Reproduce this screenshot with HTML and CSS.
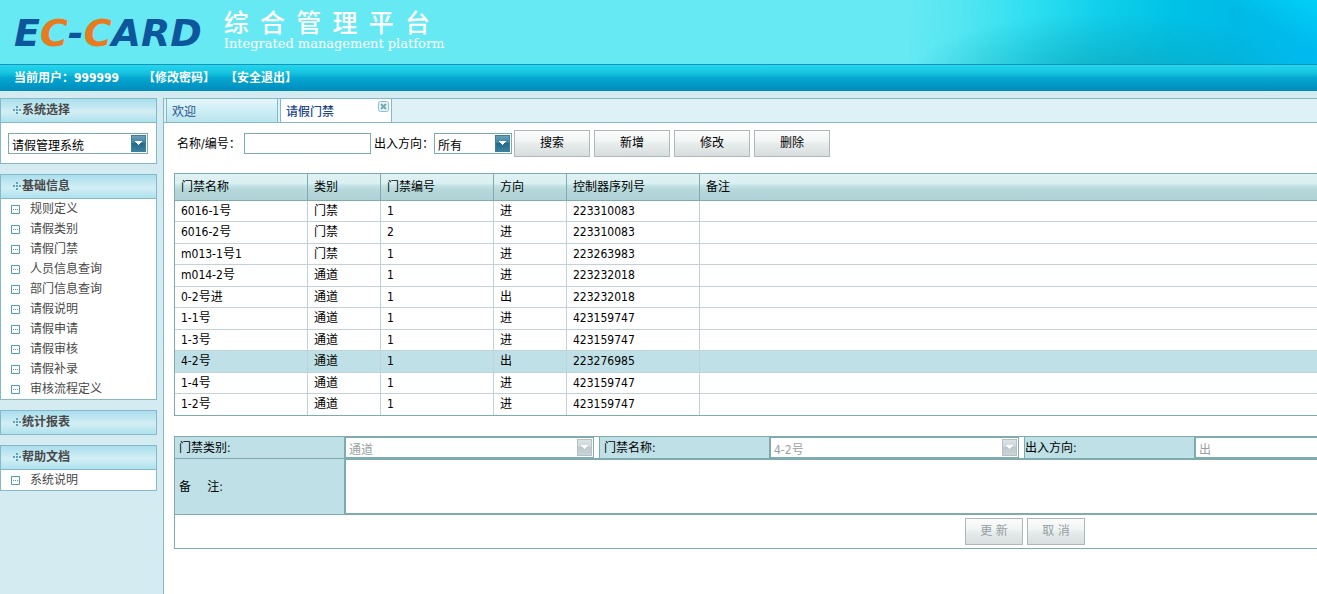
FILE: index.html
```html
<!DOCTYPE html>
<html lang="zh-CN">
<head>
<meta charset="utf-8">
<title>综合管理平台</title>
<link rel="stylesheet" href="styles.css">
</head>
<body>
<svg class="defs" aria-hidden="true">
  <symbol id="plus" viewBox="0 0 9 9"><path d="M3 0h2v2H3zM0 3h2v2H0zM3 3h2v2H3zM6 3h2v2H6zM3 6h2v2H3z" fill="#5aa3bb"/></symbol>
  <symbol id="leaf" viewBox="0 0 9 9"><path d="M.5.5h8v8h-8z" fill="#fff" stroke="#4f9db5"/><path d="M2 4h1v1H2zM4 4h1v1H4zM6 4h1v1H6z" fill="#4f9db5"/></symbol>
</svg>
<header class="banner">
  <div class="logo">E<span class="accent">C</span>-<span class="accent">C</span>ARD</div>
  <div class="brand">
    <h1 class="brand-title">综&ensp;合&ensp;管&ensp;理&ensp;平&ensp;台</h1>
    <p class="brand-sub">Integrated management platform</p>
  </div>
</header>
<nav class="userbar">
  <span class="user">当前用户：999999</span>
  <a href="#">【修改密码】</a>
  <a href="#">【安全退出】</a>
</nav>
<div class="layout">
  <aside class="sidebar">
    <section class="panel">
      <h2 class="panel-head"><svg class="plus"><use href="#plus"/></svg>系统选择</h2>
      <div class="panel-body picker">
        <div class="select-wrap">
          <select class="select" aria-label="系统选择"><option>请假管理系统</option></select>
          <svg class="arrow" viewBox="0 0 15 17"><use href="#drop"/></svg>
        </div>
      </div>
    </section>
    <section class="panel">
      <h2 class="panel-head"><svg class="plus"><use href="#plus"/></svg>基础信息</h2>
      <ul class="panel-body menu">
        <li><svg class="leaf"><use href="#leaf"/></svg><a href="#">规则定义</a></li>
        <li><svg class="leaf"><use href="#leaf"/></svg><a href="#">请假类别</a></li>
        <li><svg class="leaf"><use href="#leaf"/></svg><a href="#">请假门禁</a></li>
        <li><svg class="leaf"><use href="#leaf"/></svg><a href="#">人员信息查询</a></li>
        <li><svg class="leaf"><use href="#leaf"/></svg><a href="#">部门信息查询</a></li>
        <li><svg class="leaf"><use href="#leaf"/></svg><a href="#">请假说明</a></li>
        <li><svg class="leaf"><use href="#leaf"/></svg><a href="#">请假申请</a></li>
        <li><svg class="leaf"><use href="#leaf"/></svg><a href="#">请假审核</a></li>
        <li><svg class="leaf"><use href="#leaf"/></svg><a href="#">请假补录</a></li>
        <li><svg class="leaf"><use href="#leaf"/></svg><a href="#">审核流程定义</a></li>
      </ul>
    </section>
    <section class="panel">
      <h2 class="panel-head"><svg class="plus"><use href="#plus"/></svg>统计报表</h2>
    </section>
    <section class="panel">
      <h2 class="panel-head"><svg class="plus"><use href="#plus"/></svg>帮助文档</h2>
      <ul class="panel-body menu">
        <li><svg class="leaf"><use href="#leaf"/></svg><a href="#">系统说明</a></li>
      </ul>
    </section>
  </aside>
  <main class="main">
    <div class="tabs">
      <a class="tab" href="#">欢迎</a>
      <div class="tab active"><a href="#">请假门禁</a>
        <button class="close" type="button" aria-label="关闭"><svg viewBox="0 0 11 11"><rect x=".5" y=".5" width="10" height="10" rx="2" fill="#e6f4f7" stroke="#8fbfca"/><path d="M3 3l5 5M8 3l-5 5" stroke="#6fabb9" stroke-width="2"/></svg></button>
      </div>
    </div>
    <form class="toolbar">
      <label class="find" for="q">名称/编号：</label>
      <input class="field" id="q" type="text">
      <label class="way" for="dir">出入方向：</label>
      <div class="select-wrap short">
        <select class="select" id="dir"><option>所有</option></select>
        <svg class="arrow" viewBox="0 0 15 17"><use href="#drop"/></svg>
      </div>
      <div class="buttons">
        <button class="btn" type="button">搜索</button>
        <button class="btn" type="button">新增</button>
        <button class="btn" type="button">修改</button>
        <button class="btn" type="button">删除</button>
      </div>
    </form>
    <table class="grid">
      <colgroup><col class="c-name"><col class="c-kind"><col class="c-no"><col class="c-kind"><col class="c-name"><col></colgroup>
      <thead><tr><th>门禁名称</th><th>类别</th><th>门禁编号</th><th>方向</th><th>控制器序列号</th><th>备注</th></tr></thead>
      <tbody>
        <tr><td>6016-1号</td><td>门禁</td><td>1</td><td>进</td><td>223310083</td><td></td></tr>
        <tr><td>6016-2号</td><td>门禁</td><td>2</td><td>进</td><td>223310083</td><td></td></tr>
        <tr><td>m013-1号1</td><td>门禁</td><td>1</td><td>进</td><td>223263983</td><td></td></tr>
        <tr><td>m014-2号</td><td>通道</td><td>1</td><td>进</td><td>223232018</td><td></td></tr>
        <tr><td>0-2号进</td><td>通道</td><td>1</td><td>出</td><td>223232018</td><td></td></tr>
        <tr><td>1-1号</td><td>通道</td><td>1</td><td>进</td><td>423159747</td><td></td></tr>
        <tr><td>1-3号</td><td>通道</td><td>1</td><td>进</td><td>423159747</td><td></td></tr>
        <tr class="selected"><td>4-2号</td><td>通道</td><td>1</td><td>出</td><td>223276985</td><td></td></tr>
        <tr><td>1-4号</td><td>通道</td><td>1</td><td>进</td><td>423159747</td><td></td></tr>
        <tr><td>1-2号</td><td>通道</td><td>1</td><td>进</td><td>423159747</td><td></td></tr>
      </tbody>
    </table>
    <form class="detail">
      <div class="detail-row">
        <label class="cell-label" for="kind">门禁类别:</label>
        <div class="cell"><div class="select-wrap">
          <select class="select" id="kind" disabled><option>通道</option></select>
          <svg class="arrow" viewBox="0 0 15 17"><use href="#drop-off"/></svg>
        </div></div>
        <label class="cell-label" for="door">门禁名称:</label>
        <div class="cell"><div class="select-wrap">
          <select class="select" id="door" disabled><option>4-2号</option></select>
          <svg class="arrow" viewBox="0 0 15 17"><use href="#drop-off"/></svg>
        </div></div>
        <label class="cell-label flush" for="inout">出入方向:</label>
        <div class="cell last">
          <select class="select" id="inout" disabled><option>出</option></select>
        </div>
      </div>
      <div class="detail-row note-row">
        <label class="cell-label" for="note">备&emsp;&ensp;注:</label>
        <textarea class="note" id="note"></textarea>
      </div>
      <div class="detail-actions">
        <button class="btn small" type="button" disabled>更 新</button>
        <button class="btn small" type="button" disabled>取 消</button>
      </div>
    </form>
  </main>
</div>
<svg class="defs" aria-hidden="true">
  <linearGradient id="g-on" x2="0" y2="1"><stop offset="0" stop-color="#6ba3bb"/><stop offset=".48" stop-color="#3f819f"/><stop offset=".5" stop-color="#246a89"/><stop offset="1" stop-color="#3b829f"/></linearGradient>
  <linearGradient id="g-off" x2="0" y2="1"><stop offset="0" stop-color="#dbe3e7"/><stop offset=".48" stop-color="#cbd5d9"/><stop offset=".5" stop-color="#bec9cd"/><stop offset="1" stop-color="#c9d5d9"/></linearGradient>
  <symbol id="drop" viewBox="0 0 15 17"><rect x=".5" y=".5" width="14" height="16" fill="url(#g-on)" stroke="#3c7f99"/><path d="M4 6h7v1h-1v1H9v1H8v1H7V9H6V8H5V7H4z" fill="#fff"/></symbol>
  <symbol id="drop-off" viewBox="0 0 15 17"><rect x=".5" y=".5" width="14" height="16" fill="url(#g-off)" stroke="#b9bfc2"/><path d="M4 6h7v1h-1v1H9v1H8v1H7V9H6V8H5V7H4z" fill="#fff"/></symbol>
</svg>
</body>
</html>
```
FILE: styles.css
```css
* { box-sizing: border-box; }
html, body { height: 100%; }
body {
  margin: 0;
  display: flex;
  flex-direction: column;
  background: #d4ecf1;
  color: #000;
  font: 12px/20px "DejaVu Sans Condensed", "Noto Sans CJK SC", sans-serif;
}
a { color: inherit; text-decoration: none; }
input, select, textarea, button { font: inherit; color: inherit; margin: 0; border-radius: 0; }
.defs { position: absolute; width: 0; height: 0; }

.banner {
  flex: none;
  height: 64px;
  display: flex;
  padding-left: 14px;
  gap: 22px;
  background:
    linear-gradient(28deg, transparent 82%, #00e0ff88 98%) right / 417px 100% no-repeat,
    radial-gradient(ellipse 200px 64px at 50% 120%, #109fb4aa, #109fb455 50%, transparent) right / 417px 100% no-repeat,
    linear-gradient(95deg, #66e9f3 2%, #55e6f1 14%, #30e0f0 30%, #10cfeb 48%, #00c2e6 65%, #00bae6 80%, #00baf0 100%) right / 417px 100% no-repeat,
    #66e9f3;
}
.logo {
  font: italic bold 38px/66px "DejaVu Sans", sans-serif;
  color: #0e569c;
}
.logo .accent { color: #e87b1e; }
.brand { padding-top: 9px; color: #fff; }
.brand-title { margin: 0; font-size: 25px; line-height: 29px; font-weight: 500; }
.brand-sub { margin: 0; font: 13px/12px "DejaVu Serif", serif; }

.userbar {
  flex: none;
  height: 27px;
  display: flex;
  gap: 10px;
  padding-left: 14px;
  border-top: 1px solid #1994b8;
  background: linear-gradient(#24d6ee, #16c4e0 30%, #04a7cf 50%, #008bbd);
  color: #fff;
  font-weight: bold;
  line-height: 26px;
}
.user { margin-right: 14px; }

.layout { flex: 1; display: flex; padding-top: 7px; min-height: 0; }
.sidebar { flex: none; width: 157px; margin-right: 6px; display: flex; flex-direction: column; gap: 10px; }
.panel { border: 1px solid #86b9c7; }
.panel-head {
  margin: 0;
  height: 23px;
  display: flex;
  align-items: center;
  padding-left: 12px;
  background: linear-gradient(#a9deec, #d3eef4 55%, #aee2ee);
  color: #484848;
  font-size: 12px;
  line-height: 25px;
}
.plus { width: 9px; height: 9px; }
.panel-body { margin: 0; padding: 0; border-top: 1px solid #86b9c7; background: #fff; }
.picker { padding: 10px 8px 9px 7px; }
.menu { list-style: none; color: #484848; }
.menu li { display: flex; align-items: center; gap: 10px; height: 20px; padding-left: 10px; line-height: 22px; }
.leaf { width: 9px; height: 9px; }

.select-wrap { position: relative; height: 21px; }
.select {
  display: block;
  width: 100%;
  height: 21px;
  padding: 2px 3px 0;
  border: 1px solid #7dabae;
  background: #fff;
  appearance: none;
}
.select:disabled { color: #999fa2; opacity: 1; }
.arrow { position: absolute; right: 2px; top: 2px; width: 15px; height: 17px; pointer-events: none; }
.select-wrap.short { width: 78px; }

.main {
  flex: 1;
  min-width: 0;
  border-top: 1px solid #86b9c7;
  border-left: 1px solid #86b9c7;
  background: #fff;
}
.tabs {
  display: flex;
  gap: 2px;
  height: 24px;
  padding-left: 2px;
  border-bottom: 1px solid #86b9c7;
  background: #def1f7;
}
.tab {
  width: 112px;
  padding-left: 5px;
  border-left: 1px solid #86b9c7;
  border-right: 1px solid #86b9c7;
  background: linear-gradient(#e4f6fa, #b9e5ef);
  color: #28508f;
  line-height: 26px;
}
.tab.active { position: relative; background: #fff; color: #1c458b; font-weight: 500; }
.close { position: absolute; top: 2px; right: 2px; width: 11px; height: 11px; padding: 0; border: 0; background: none; }
.close svg { display: block; width: 11px; height: 11px; }

.toolbar { display: flex; align-items: center; padding: 7px 0 16px 13px; }
.find { flex: none; width: 67px; }
.way { flex: none; width: 60px; margin-left: 3px; }
.field { width: 127px; height: 21px; padding: 0 3px; border: 1px solid #7dabae; background: #fff; }
.buttons { display: flex; gap: 4px; margin-left: 2px; }
.btn {
  width: 76px;
  height: 27px;
  padding: 0 0 2px;
  border: 1px solid #acb8ba;
  background: linear-gradient(#fbfbfb, #f2f5f5 40%, #e7eded 50%, #d8dddd);
}
.btn.small { width: 58px; }
.btn:disabled { color: #929fa3; }

.grid {
  width: calc(100% - 10px);
  margin-left: 10px;
  table-layout: fixed;
  border-spacing: 0;
  border: 1px solid #7dabae;
  border-right: 0;
}
.c-name { width: 133px; }
.c-kind { width: 73px; }
.c-no { width: 113px; }
.grid th, .grid td { padding: 0 6px; text-align: left; font-weight: normal; border-right: 1px solid #c1d2d8; }
.grid th {
  height: 27px;
  line-height: 26px;
  border-color: #7dabae;
  border-bottom: 1px solid #7dabae;
  background: linear-gradient(#dff2f3, #d9eff1 38%, #c6e6e8 42%, #b7d8db 60%, #b1d2d6);
}
.grid th:last-child, .grid td:last-child { border-right: 0; }
.grid td { height: 21px; line-height: 20px; border-bottom: 1px solid #c1d2d8; }
.grid tr:nth-child(even) td { height: 22px; padding-bottom: 1px; }
.grid tr:last-child td { height: 21px; border-bottom: 0; }
.grid .selected td { background: #bfe0e6; }

.detail { margin: 20px 0 0 10px; border: 1px solid #7dabae; border-right: 0; }
.detail-row { display: flex; border-bottom: 1px solid #7dabae; }
.cell-label {
  flex: none;
  width: 170px;
  height: 21px;
  padding-left: 4px;
  border-right: 1px solid #7dabae;
  background: #bfe0e6;
  line-height: 23px;
}
.cell-label.flush { padding-left: 0; }
.cell { flex: none; width: 255px; padding-right: 5px; border-right: 1px solid #7dabae; }
.cell.last { flex: 1; min-width: 0; padding-right: 0; border-right: 0; }
.cell.last .select { border-right: 0; }
.note-row .cell-label { height: 55px; line-height: 57px; }
.note { flex: 1; min-width: 0; height: 55px; padding: 3px; border: 1px solid #7dabae; border-right: 0; resize: none; background: #fff; }
.detail-actions { display: flex; gap: 4px; padding: 3px 0 3px 790px; }
```
